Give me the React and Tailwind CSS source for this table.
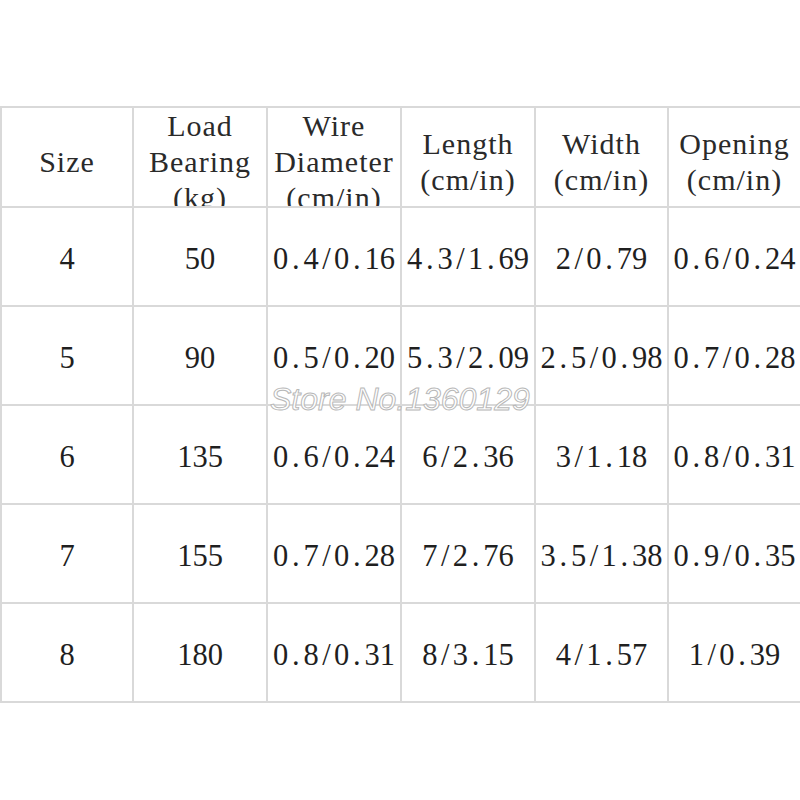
import React from "react";

const headers = [
  ["Size"],
  ["Load", "Bearing", "(kg)"],
  ["Wire", "Diameter", "(cm/in)"],
  ["Length", "(cm/in)"],
  ["Width", "(cm/in)"],
  ["Opening", "(cm/in)"],
];

const rows = [
  ["4", "50", "0.4/0.16", "4.3/1.69", "2/0.79", "0.6/0.24"],
  ["5", "90", "0.5/0.20", "5.3/2.09", "2.5/0.98", "0.7/0.28"],
  ["6", "135", "0.6/0.24", "6/2.36", "3/1.18", "0.8/0.31"],
  ["7", "155", "0.7/0.28", "7/2.76", "3.5/1.38", "0.9/0.35"],
  ["8", "180", "0.8/0.31", "8/3.15", "4/1.57", "1/0.39"],
];

function Mono({ text }) {
  return (
    <span className="whitespace-nowrap">
      {text.split("").map((c, i) => (
        <span key={i} className="inline-block w-[0.5em] text-center">
          {c}
        </span>
      ))}
    </span>
  );
}

export default function App() {
  return (
    <div className="relative w-[800px] h-[800px] overflow-hidden bg-white">
      <div className="pt-[106px]">
        <div className="grid grid-cols-[132px_134px_134px_134px_133px_133px] w-[802px] border-t-2 border-l-2 border-[#d9d9d9]">
          {headers.map((h, i) => (
            <div
              key={i}
              className="h-[100px] overflow-hidden border-r-2 border-b-2 border-[#d9d9d9] flex items-center justify-center pt-[10px]"
            >
              <div className="flex flex-col items-center text-[30px] leading-[36px] tracking-[1px] text-[#2a2a2a] font-['Liberation_Serif',serif] whitespace-nowrap">
                {h.map((l, j) => (
                  <span key={j}>{l}</span>
                ))}
              </div>
            </div>
          ))}
          {rows.map((r, ri) =>
            r.map((c, ci) => (
              <div
                key={ri + "-" + ci}
                className="h-[99px] border-r-2 border-b-2 border-[#d9d9d9] flex items-center justify-center pt-[6px] text-[30.5px] text-[#1f1f1f] font-['Liberation_Serif',serif]"
              >
                <Mono text={c} />
              </div>
            ))
          )}
        </div>
      </div>
      <div className="absolute left-[270px] top-[383px] text-[32px] italic leading-none text-white font-['Liberation_Sans',sans-serif] [-webkit-text-stroke:1px_#b8b8b8] whitespace-nowrap">
        Store No.1360129
      </div>
    </div>
  );
}
